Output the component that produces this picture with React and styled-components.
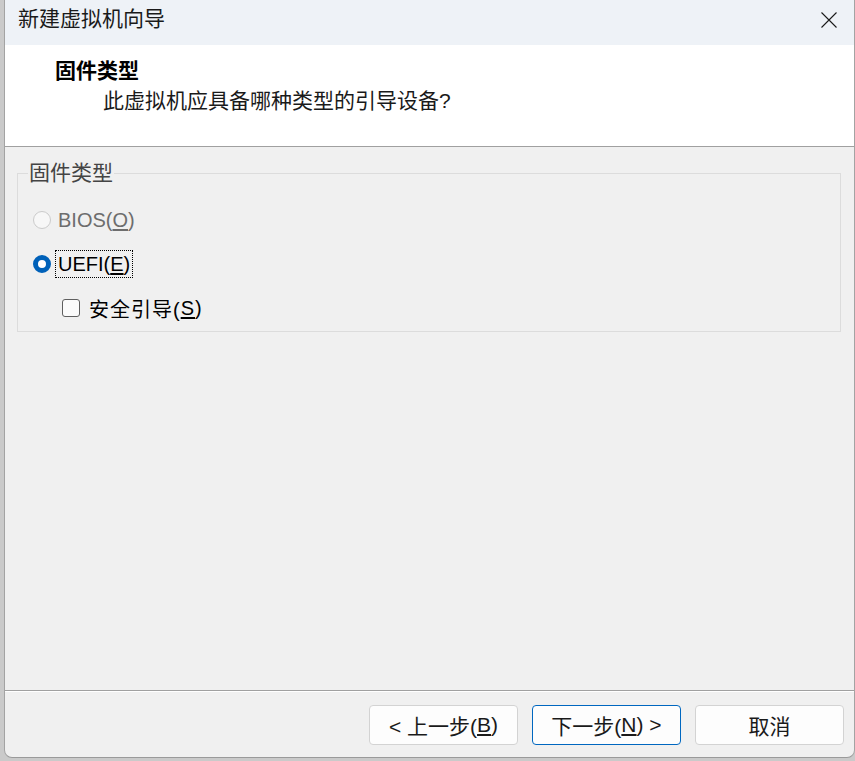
import React from 'react'
import styled, { createGlobalStyle } from 'styled-components';

const GlobalStyle = createGlobalStyle`
  html, body {
    margin: 0;
    padding: 0;
    background: #cacaca;
    overflow: hidden;
  }
  body {
    font-family: "Liberation Sans", "Noto Sans CJK SC", sans-serif;
    color: #1a1a1a;
  }
`

function CloseIcon() {
  return (
    <svg width="16" height="16" viewBox="0 0 16 16">
      <path d="M0.5 0.5 L15.5 15.5 M15.5 0.5 L0.5 15.5" stroke="#1a1a1a" strokeWidth="1.1" fill="none" />
    </svg>
  )
}

function App() {
  return (
    <>
      <GlobalStyle />
      <Window>
        <TitleBar>
          <Title>新建虚拟机向导</Title>
          <CloseButton><CloseIcon /></CloseButton>
        </TitleBar>

        <Header>
          <HeaderTitle>固件类型</HeaderTitle>
          <HeaderSub>此虚拟机应具备哪种类型的引导设备?</HeaderSub>
        </Header>

        <Body>
          <Group>
            <Legend>固件类型</Legend>
            <Row>
              <Radio disabled />
              <Label disabled>BIOS(<u>O</u>)</Label>
            </Row>
            <Row>
              <Radio checked />
              <Label focused>UEFI(<u>E</u>)</Label>
            </Row>
            <Row indent="29px">
              <Checkbox />
              <Label gap="6px" spacing="1px">安全引导(<u>S</u>)</Label>
            </Row>
          </Group>
        </Body>

        <Footer>
          <Button>&lt; 上一步(<u>B</u>)</Button>
          <Button primary>下一步(<u>N</u>) &gt;</Button>
          <Button>取消</Button>
        </Footer>
      </Window>
    </>
  )
}

const Window = styled.div`
  margin-left: 4px;
  width: 851px;
  height: 758px;
  box-sizing: border-box;
  display: flex;
  flex-direction: column;
  background: #f0f0f0;
  border-left: 1px solid #a3a3a3;
  border-right: 1px solid #a3a3a3;
  border-bottom: 1px solid #9a9a9a;
  border-radius: 0 0 8px 8px;
  overflow: hidden;
`

const TitleBar = styled.div`
  height: 45px;
  flex-shrink: 0;
  display: flex;
  align-items: flex-start;
  justify-content: space-between;
  background: #eef2f7;
  padding: 0 17px 0 13px;
`

const Title = styled.div`
  font-size: 21px;
  line-height: 38px;
  color: #1a1a1a;
`

const CloseButton = styled.div`
  height: 39px;
  display: flex;
  align-items: center;
`

const Header = styled.div`
  height: 102px;
  flex-shrink: 0;
  box-sizing: border-box;
  background: #ffffff;
  border-bottom: 1px solid #a0a0a0;
  padding: 11px 0 0 50px;
`

const HeaderTitle = styled.div`
  font-size: 21px;
  line-height: 30px;
  font-weight: bold;
  color: #000;
`

const HeaderSub = styled.div`
  font-size: 21px;
  line-height: 30px;
  padding-left: 48px;
  color: #1a1a1a;
`

const Body = styled.div`
  flex: 1;
  padding: 26px 13px 0 12px;
`

const Group = styled.div`
  position: relative;
  height: 159px;
  box-sizing: border-box;
  border: 1px solid #dcdcdc;
  padding: 31px 0 0 15px;
  display: flex;
  flex-direction: column;
  gap: 14px;
`

const Legend = styled.span`
  position: absolute;
  top: -13px;
  left: 10px;
  padding: 0 1px;
  background: #f0f0f0;
  font-size: 21px;
  line-height: 24px;
  color: #444444;
`

const Row = styled.div`
  height: 30px;
  display: flex;
  align-items: center;
  padding-left: ${p => p.indent || '0'};
`

const Radio = styled.span`
  width: 18px;
  height: 18px;
  box-sizing: border-box;
  border-radius: 50%;
  flex-shrink: 0;
  background: ${p => p.checked ? '#ffffff' : '#f7f7f7'};
  border: ${p => p.checked ? '5px solid #0061b9' : '1px solid #cbcbcb'};
`

const Checkbox = styled.span`
  width: 18px;
  height: 18px;
  box-sizing: border-box;
  flex-shrink: 0;
  border: 1px solid #5f5f5f;
  border-radius: 3px;
  background: #fbfbfb;
`

const Label = styled.span`
  margin-left: ${p => p.gap || '4px'};
  padding: 0 2px;
  height: 28px;
  box-sizing: border-box;
  display: flex;
  align-items: center;
  font-size: 20px;
  letter-spacing: ${p => p.spacing || '0'};
  color: ${p => p.disabled ? '#6d6d6d' : '#000'};
  border: 1px dotted ${p => p.focused ? '#000' : 'transparent'};

  u {
    text-underline-offset: 2px;
  }
`

const Footer = styled.div`
  flex-shrink: 0;
  border-top: 1px solid #a0a0a0;
  box-shadow: inset 0 1px 0 #ffffff;
  padding: 14px 10px 12px 0;
  display: flex;
  justify-content: flex-end;
  gap: 14px;
`

const Button = styled.div`
  width: 149px;
  height: 40px;
  box-sizing: border-box;
  display: flex;
  align-items: center;
  justify-content: center;
  border: 1px solid ${p => p.primary ? '#0067c0' : '#d3d3d3'};
  border-radius: 4px;
  background: #fdfdfd;
  font-size: 21px;
  color: #1a1a1a;

  u {
    text-underline-offset: 2px;
  }
`

export default App
